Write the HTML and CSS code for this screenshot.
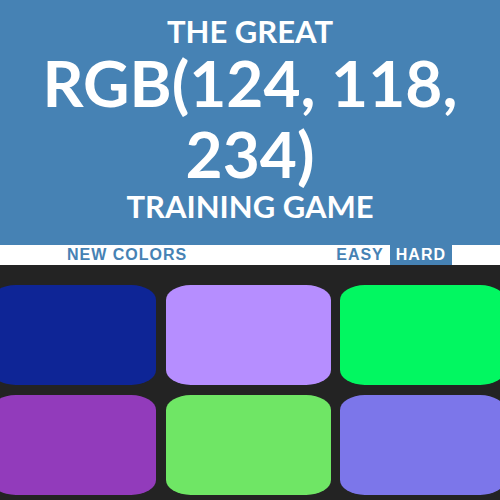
FILE: index.html
```html
<!DOCTYPE html>
<html>
<head>
<meta charset="utf-8">
<link rel="stylesheet" href="styles.css">
</head>
<body>
<h1 class="title">The Great<br><span class="color-display">RGB(124, 118, 234)</span><br>Training Game</h1>
<div class="stripe">
  <button class="btn btn-reset">New Colors</button>
  <span class="message"></span>
  <button class="btn">Easy</button>
  <button class="btn selected">Hard</button>
</div>
<div class="container">
  <div class="square" style="background: rgb(14, 37, 150);"></div>
  <div class="square" style="background: rgb(182, 142, 255);"></div>
  <div class="square" style="background: rgb(2, 247, 97);"></div>
  <div class="square" style="background: rgb(146, 59, 187);"></div>
  <div class="square" style="background: rgb(111, 230, 101);"></div>
  <div class="square" style="background: rgb(124, 118, 234);"></div>
</div>
</body>
</html>
```
FILE: styles.css
```css
html, body {
  margin: 0;
  padding: 0;
}
body {
  background: #232323;
  width: 500px;
  height: 500px;
  overflow: hidden;
  font-family: "Liberation Sans", Arial, sans-serif;
}
.title {
  margin: 0;
  height: 245px;
  box-sizing: border-box;
  padding: 14px 0 0;
  background: #4682b4;
  color: #fff;
  text-align: center;
  text-transform: uppercase;
  font-family: Lato, sans-serif;
  font-weight: 700;
  font-size: 31px;
  line-height: 1.1;
}
.color-display {
  font-size: 64px;
  line-height: 70.4px;
}
.stripe {
  display: flex;
  height: 20px;
  background: #fff;
  padding-left: 61px;
}
.btn {
  border: none;
  background: none;
  padding: 0 6px;
  margin: 0;
  height: 20px;
  font-family: "Liberation Sans", Arial, sans-serif;
  font-size: 16px;
  font-weight: 700;
  letter-spacing: 1px;
  text-transform: uppercase;
  color: #4682b4;
  line-height: 20px;
}
.btn.selected {
  background: #4682b4;
  color: #fff;
}
.message {
  width: 137px;
}
.container {
  display: grid;
  grid-template-columns: repeat(3, 165px);
  grid-auto-rows: 100px;
  column-gap: 9.5px;
  row-gap: 10px;
  width: max-content;
  margin: 20px 0 0 -9px;
}
.square {
  border-radius: 15%;
}
```
